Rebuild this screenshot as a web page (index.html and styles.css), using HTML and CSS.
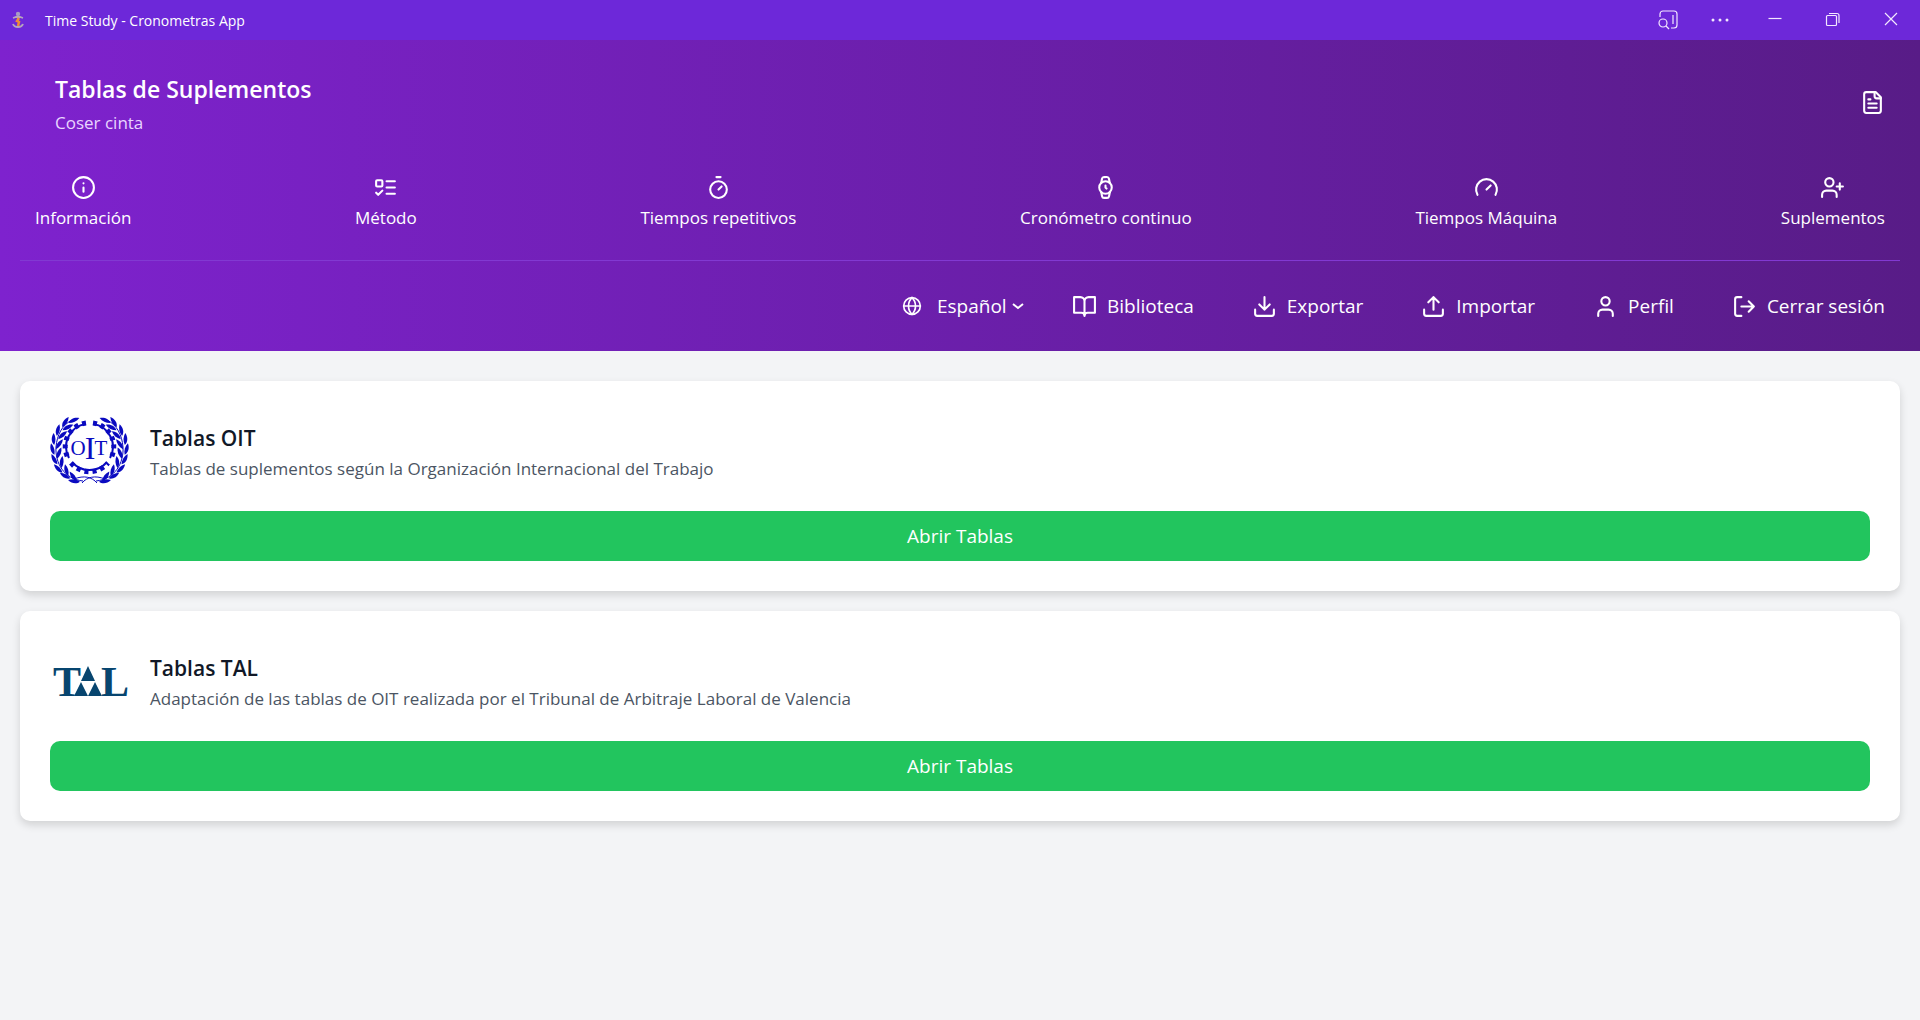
FILE: index.html
```html
<!DOCTYPE html>
<html lang="es">
<head>
    <title>Time Study - Cronometras App</title>
    <meta charset="utf-8">
    <meta name="viewport" content="width=device-width, initial-scale=1">
    <link rel="stylesheet" href="styles.css">
</head>
<body>
    <div class="titlebar">
        <svg class="app-icon" viewBox="0 0 20 20" fill="none">
            <circle cx="10" cy="4" r="2.2" fill="#a79ac4"/>
            <path d="M5 8l3-1h4l3 1M10 7v4M5 14c1 3 3 3 5 3s4 0 5-3" stroke="#b5a5bd" stroke-width="1.8"/>
            <path d="M11 8l-2 3 2 1-1 4" stroke="#f08a35" stroke-width="2.5"/>
        </svg>
        <span class="app-name">Time Study - Cronometras App</span>
        <div class="window-buttons">
            <button aria-label="Buscar">
                <svg class="win-icon" viewBox="0 0 20 20">
                    <path d="M2 7V4a3 3 0 0 1 3-3h11a3 3 0 0 1 3 3v11a3 3 0 0 1-3 3h-3M15 5v9"/>
                    <circle cx="5" cy="13" r="4"/>
                    <path d="M8 16l3 3"/>
                </svg>
            </button>
            <button aria-label="Más opciones">
                <svg class="win-icon" viewBox="0 0 20 20">
                    <g class="solid"><circle cx="3" cy="10" r="1.5"/><circle cx="10" cy="10" r="1.5"/><circle cx="17" cy="10" r="1.5"/></g>
                </svg>
            </button>
            <button aria-label="Minimizar">
                <svg class="win-icon" viewBox="0 0 20 20"><path d="M3.5 8.5h13"/></svg>
            </button>
            <button aria-label="Restaurar">
                <svg class="win-icon" viewBox="0 0 20 20"><rect x="3.5" y="5.5" width="10" height="10" rx="1"/><path d="M6 3.5h8a2 2 0 0 1 2 2V13"/></svg>
            </button>
            <button aria-label="Cerrar">
                <svg class="win-icon" viewBox="0 0 20 20"><path d="M4 3l12 12M16 3L4 15"/></svg>
            </button>
        </div>
    </div>

    <header class="header">
        <div class="heading">
            <div>
                <h1>Tablas de Suplementos</h1>
                <p>Coser cinta</p>
            </div>
            <button class="report" aria-label="Informe">
                <svg class="icon" viewBox="0 0 24 24"><path d="M15 2H6a2 2 0 0 0-2 2v16a2 2 0 0 0 2 2h12a2 2 0 0 0 2-2V7Z"/><path d="M14 2v4a2 2 0 0 0 2 2h4M10 9H8M16 13H8M16 17H8"/></svg>
            </button>
        </div>

        <nav class="tabs">
            <button>
                <svg class="icon" viewBox="0 0 24 24"><circle cx="12" cy="12" r="10"/><path d="M12 16v-4M12 8h.01"/></svg>
                <span>Información</span>
            </button>
            <button>
                <svg class="icon" viewBox="0 0 24 24"><rect x="3" y="5" width="6" height="6" rx="1"/><path d="m3 17 2 2 4-4M13 6h8M13 12h8M13 18h8"/></svg>
                <span>Método</span>
            </button>
            <button>
                <svg class="icon" viewBox="0 0 24 24"><path d="M10 2h4M12 14l3-3"/><circle cx="12" cy="14" r="8"/></svg>
                <span>Tiempos repetitivos</span>
            </button>
            <button>
                <svg class="icon" viewBox="0 0 24 24"><circle cx="12" cy="12" r="6"/><path d="M12 10v2l1 1M16.13 7.66l-.81-4.05a2 2 0 0 0-2-1.61h-2.68a2 2 0 0 0-2 1.61l-.78 4.05M7.88 16.36l.8 4a2 2 0 0 0 2 1.61h2.72a2 2 0 0 0 2-1.61l.81-4.05"/></svg>
                <span>Cronómetro continuo</span>
            </button>
            <button>
                <svg class="icon" viewBox="0 0 24 24"><path d="m12 14 4-4"/><path d="M3.34 19a10 10 0 1 1 17.32 0"/></svg>
                <span>Tiempos Máquina</span>
            </button>
            <button>
                <svg class="icon" viewBox="0 0 24 24"><path d="M16 21v-2a4 4 0 0 0-4-4H6a4 4 0 0 0-4 4v2"/><circle cx="9" cy="7" r="4"/><path d="M19 8v6M22 11h-6"/></svg>
                <span>Suplementos</span>
            </button>
        </nav>

        <div class="actions">
            <div class="language">
                <svg class="icon icon-small" viewBox="0 0 24 24"><circle cx="12" cy="12" r="10"/><path d="M2 12h20M12 2a14 14 0 0 1 0 20a14 14 0 0 1 0-20"/></svg>
                <select aria-label="Idioma">
                    <option>Español</option>
                </select>
                <svg class="chevron" viewBox="0 0 12 12"><path d="m1 4 5 4 5-4"/></svg>
            </div>
            <button>
                <svg class="icon" viewBox="0 0 24 24"><path d="M2 3h6a4 4 0 0 1 4 4v14a3 3 0 0 0-3-3H2zM22 3h-6a4 4 0 0 0-4 4v14a3 3 0 0 1 3-3h7z"/></svg>
                Biblioteca
            </button>
            <button>
                <svg class="icon" viewBox="0 0 24 24"><path d="M21 15v4a2 2 0 0 1-2 2H5a2 2 0 0 1-2-2v-4M7 10l5 5 5-5M12 15V3"/></svg>
                Exportar
            </button>
            <button>
                <svg class="icon" viewBox="0 0 24 24"><path d="M21 15v4a2 2 0 0 1-2 2H5a2 2 0 0 1-2-2v-4M17 8l-5-5-5 5M12 3v12"/></svg>
                Importar
            </button>
            <button>
                <svg class="icon" viewBox="0 0 24 24"><path d="M19 21v-2a4 4 0 0 0-4-4H9a4 4 0 0 0-4 4v2"/><circle cx="12" cy="7" r="4"/></svg>
                Perfil
            </button>
            <button>
                <svg class="icon" viewBox="0 0 24 24"><path d="M9 21H5a2 2 0 0 1-2-2V5a2 2 0 0 1 2-2h4M16 17l5-5-5-5M21 12H9"/></svg>
                Cerrar sesión
            </button>
        </div>
    </header>

    <main class="content">
        <section class="card">
            <div class="card-head">
                <svg class="logo logo-oit" viewBox="0 0 80 80">
                    <defs>
                        <path id="leaf" d="M0 5C-3 2-3-3 0-7C2-3 2 1 0 5z"/>
                        <g id="branch">
                            <path class="stem" d="M33 70C14 68 5 52 6 36C7 24 12 14 22 9"/>
                            <use href="#leaf" transform="translate(23 10) rotate(65)"/>
                            <use href="#leaf" transform="translate(15 12) rotate(32)"/>
                            <use href="#leaf" transform="translate(17 17) rotate(62)"/>
                            <use href="#leaf" transform="translate(8 20) rotate(12)"/>
                            <use href="#leaf" transform="translate(12 25) rotate(48)"/>
                            <use href="#leaf" transform="translate(4 29) rotate(-2)"/>
                            <use href="#leaf" transform="translate(9 34) rotate(34)"/>
                            <use href="#leaf" transform="translate(3 39) rotate(-16)"/>
                            <use href="#leaf" transform="translate(9 43) rotate(20)"/>
                            <use href="#leaf" transform="translate(5 49) rotate(-30)"/>
                            <use href="#leaf" transform="translate(12 52) rotate(4)"/>
                            <use href="#leaf" transform="translate(9 58) rotate(-46)"/>
                            <use href="#leaf" transform="translate(17 60) rotate(-16)"/>
                            <use href="#leaf" transform="translate(16 65) rotate(-62)"/>
                            <use href="#leaf" transform="translate(24 66) rotate(-38)"/>
                            <use href="#leaf" transform="translate(25 70) rotate(-82)"/>
                            <path class="stem" d="M24 68C34 64 42 66 47 72"/>
                        </g>
                    </defs>
                    <use href="#branch"/>
                    <use href="#branch" transform="matrix(-1 0 0 1 79 0)"/>
                    <g class="gear">
                        <path d="M36 13A23 23 0 0 0 19 47M43 13A23 23 0 0 1 60 47M22 51A23 23 0 0 0 57 51"/>
                        <path class="teeth" d="M36 12A24 24 0 0 0 18 47M43 12A24 24 0 0 1 61 47M21 52A24 24 0 0 0 58 52"/>
                    </g>
                    <g class="letters">
                        <text x="28" y="44" font-size="21">O</text>
                        <text x="40" y="48" font-size="32">I</text>
                        <text x="51" y="44" font-size="21">T</text>
                    </g>
                </svg>
                <div>
                    <h2>Tablas OIT</h2>
                    <p>Tablas de suplementos según la Organización Internacional del Trabajo</p>
                </div>
            </div>
            <button class="open">Abrir Tablas</button>
        </section>

        <section class="card">
            <div class="card-head">
                <svg class="logo logo-tal" viewBox="0 0 80 80">
                    <g class="letters" font-size="42">
                        <text x="17" y="55">T</text>
                        <text x="65" y="55">L</text>
                    </g>
                    <path d="M38 25l7 15H31zM31 41l7 14H24zM45 41l7 14H38z"/>
                </svg>
                <div>
                    <h2>Tablas TAL</h2>
                    <p>Adaptación de las tablas de OIT realizada por el Tribunal de Arbitraje Laboral de Valencia</p>
                </div>
            </div>
            <button class="open">Abrir Tablas</button>
        </section>
    </main>
</body>
</html>
```

FILE: styles.css
```css
* {
    box-sizing: border-box;
}

body {
    margin: 0;
    min-height: 100vh;
    background-color: #f3f4f6;
    color: #111827;
    font-family: 'Segoe UI', 'Open Sans', 'Noto Sans', sans-serif;
    font-size: 17px;
    line-height: 25px;
}

h1, h2, p {
    margin: 0;
}

button, select {
    border: none;
    padding: 0;
    background: none;
    color: inherit;
    font: inherit;
    cursor: pointer;
}

/* window title bar */
.titlebar {
    display: flex;
    align-items: center;
    height: 40px;
    padding-left: 8px;
    background-color: #6d28d9;
    color: white;
    font-size: 14px;
}

.app-icon {
    width: 20px;
    height: 20px;
    margin-right: 17px;
}

.window-buttons {
    display: flex;
    margin-left: auto;
}

.window-buttons button {
    display: flex;
    align-items: center;
    justify-content: center;
    width: 58px;
    height: 40px;
}

.window-buttons button:nth-child(-n+2) {
    width: 52px;
}

.win-icon {
    width: 20px;
    height: 20px;
    fill: none;
    stroke: #f3e8ff;
    stroke-width: 1.2;
}

.win-icon .solid {
    fill: #f3e8ff;
    stroke: none;
}

/* header */
.header {
    padding: 20px;
    background: linear-gradient(to right, #7e22ce, #581c87);
    color: white;
}

.heading {
    display: flex;
    align-items: center;
    justify-content: space-between;
    padding: 10px 15px 10px 35px;
}

.heading h1 {
    font-size: 23px;
    font-weight: 600;
    line-height: 38px;
}

.heading p {
    margin-top: 2px;
    color: #e9d5ff;
}

.report {
    display: flex;
}

.icon {
    flex: none;
    width: 25px;
    height: 25px;
    fill: none;
    stroke: currentColor;
    stroke-width: 2;
    stroke-linecap: round;
    stroke-linejoin: round;
}

.icon-small {
    width: 20px;
    height: 20px;
}

.tabs {
    display: flex;
    justify-content: space-between;
    padding: 20px 0;
    border-bottom: 1px solid #8239d2;
}

.tabs button {
    display: flex;
    flex-direction: column;
    align-items: center;
    gap: 5px;
    padding: 10px 15px;
}

.actions {
    display: flex;
    justify-content: flex-end;
    gap: 28px;
    padding-top: 20px;
    font-size: 19px;
}

.actions button {
    display: flex;
    align-items: center;
    gap: 10px;
    min-height: 50px;
    padding: 0 15px;
}

.language {
    display: flex;
    align-items: center;
}

.language select {
    margin-left: 15px;
    appearance: none;
}

.chevron {
    width: 12px;
    height: 12px;
    margin: 0 5px;
    fill: none;
    stroke: currentColor;
    stroke-width: 2;
}

/* cards */
.content {
    display: flex;
    flex-direction: column;
    gap: 20px;
    padding: 30px 20px;
}

.card {
    padding: 30px;
    border-radius: 10px;
    background-color: white;
    box-shadow: 0 4px 8px rgba(0, 0, 0, 0.14);
}

.card-head {
    display: flex;
    align-items: center;
    gap: 20px;
    margin-bottom: 20px;
}

.card-head h2 {
    font-size: 21px;
    font-weight: 600;
    line-height: 35px;
}

.card-head p {
    color: #4b5563;
}

.logo {
    flex: none;
    width: 80px;
    height: 80px;
}

.logo .letters {
    font-family: 'Liberation Serif', serif;
    text-anchor: middle;
}

.logo-oit {
    fill: #0a0ac0;
}

.logo-oit .stem {
    fill: none;
    stroke: #0a0ac0;
}

.logo-oit .gear {
    fill: none;
    stroke: #0a0ac0;
    stroke-width: 2;
}

.logo-oit .teeth {
    stroke-width: 5;
    stroke-dasharray: 4 4;
}

.logo-tal {
    fill: #07456f;
}

.logo-tal .letters {
    font-weight: bold;
}

.open {
    width: 100%;
    height: 50px;
    border-radius: 10px;
    background-color: #22c55e;
    color: white;
    font-size: 19px;
}

.open:hover {
    background-color: #16a34a;
}
```
